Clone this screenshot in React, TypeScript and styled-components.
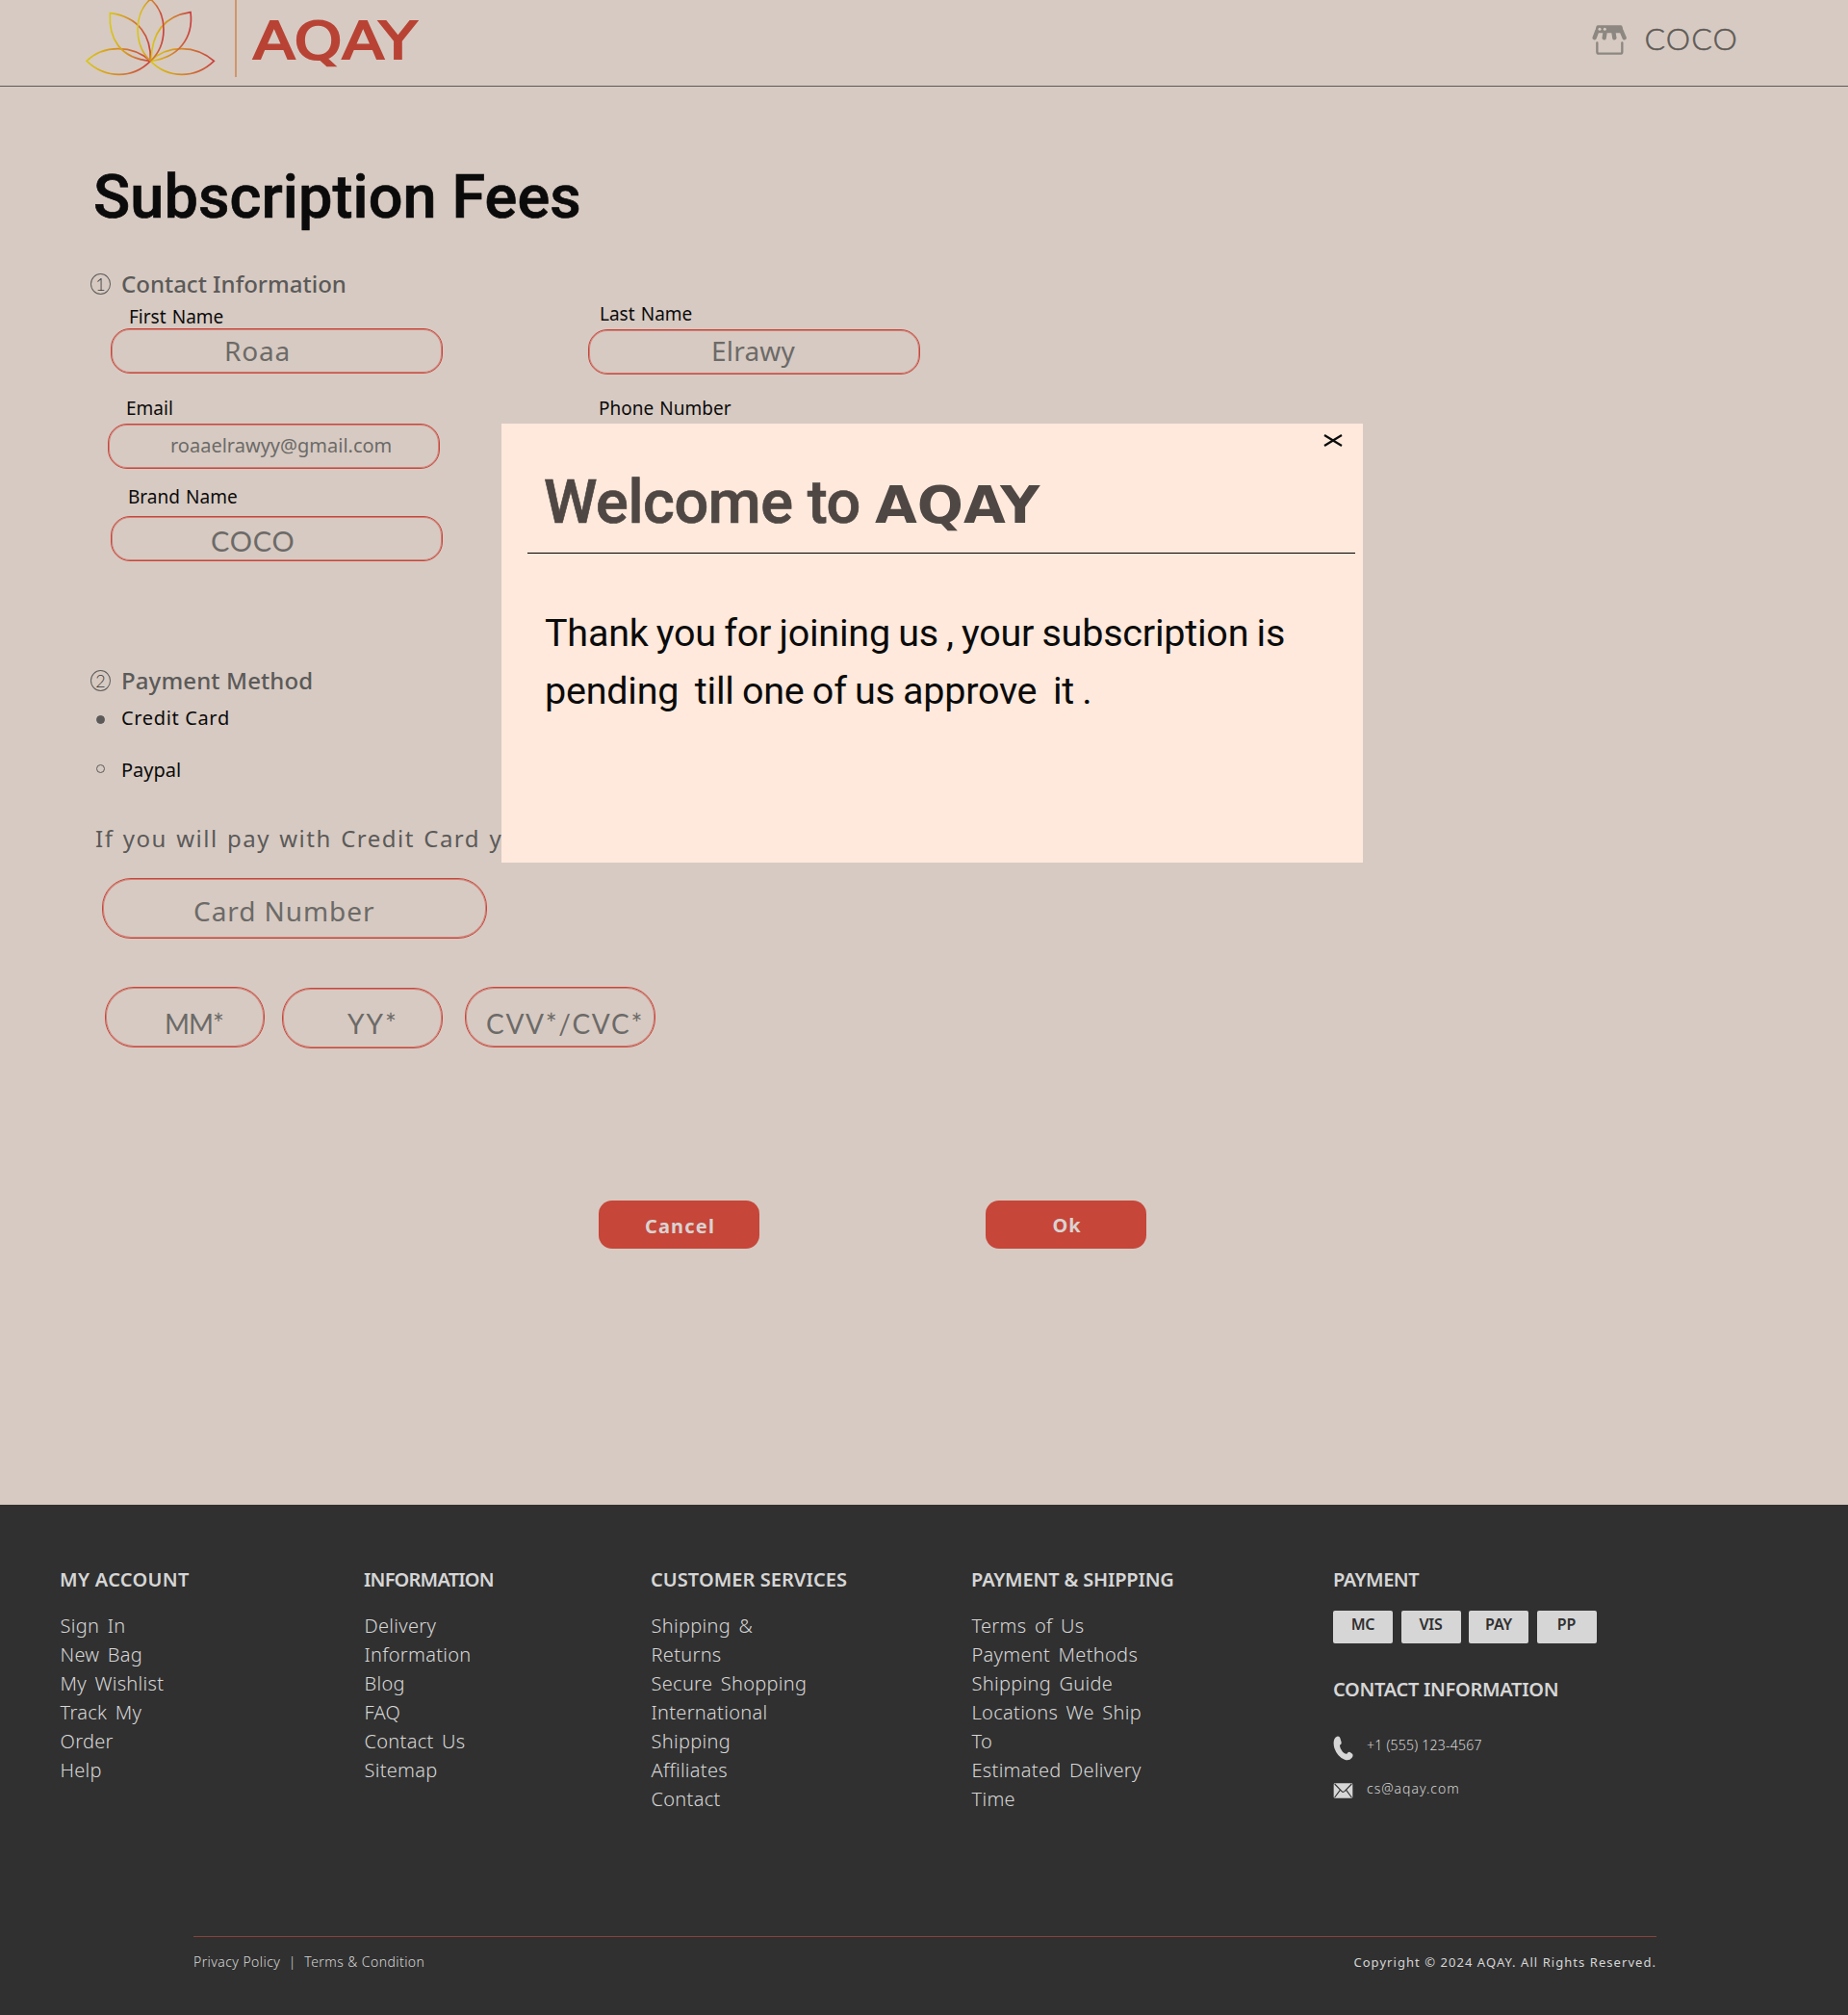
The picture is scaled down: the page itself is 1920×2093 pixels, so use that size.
import React from "react";
import styled, { createGlobalStyle } from "styled-components";

const sans = `"Noto Sans", "Open Sans", sans-serif`;
const round = `Lato, "Noto Sans", sans-serif`;
const display = `Roboto, "Liberation Sans", sans-serif`;
const wide = `"DejaVu Sans", sans-serif`;

const red = "#c8463b";
const grey = "#5b5a59";
const light = "#d6d6d6";

const GlobalStyle = createGlobalStyle`
  * { box-sizing: border-box; }
  body { margin: 0; background: #d7cac2; }
  p, h1, h2, h3, ul { margin: 0; padding: 0; font-weight: inherit; }
  ul { list-style: none; }
`;

const Page = styled.div`
  position: relative;
  width: 1920px;
  height: 2093px;
  overflow: hidden;
  display: flex;
  flex-direction: column;
  background: #d7cac2;
  color: #0b0b0b;
  font-family: ${sans};
  white-space: nowrap;
`;

const Header = styled.header`
  display: flex;
  align-items: flex-start;
  height: 90px;
  flex: none;
  border-bottom: 1px solid #5f5957;
  padding-left: 88px;
`;

const Lotus = styled.svg`
  width: 136px;
  height: 80px;
  flex: none;
`;

const Divider = styled.div`
  width: 2px;
  height: 80px;
  margin-left: 20px;
  background: #d0966a;
`;

const Wordmark = styled.span`
  display: block;
  width: 145px;
  margin: 11px 0 0 17px;
  font: 400 53px/64px ${wide};
  color: #b84335;
  -webkit-text-stroke: 2px #b84335;
  transform: scaleX(1.2);
  transform-origin: 0 0;
`;

const Account = styled.div`
  display: flex;
  margin-left: auto;
  padding-right: 114px;
`;

const ShopIcon = styled.svg`
  width: 36px;
  height: 34px;
  margin: 25px 18px 0 0;
`;

const AccountName = styled.span`
  margin-top: 20px;
  font: 300 32px/40px ${round};
  letter-spacing: 1.1px;
  color: #5f5b57;
  -webkit-text-stroke: 0.5px #5f5b57;
`;

const Main = styled.main`
  display: flex;
  flex-direction: column;
  height: 1473px;
  flex: none;
`;

const Title = styled.h1`
  margin: 77px 0 1px 97px;
  font: 500 63px/76px ${display};
  letter-spacing: 0.1px;
  -webkit-text-stroke: 0.7px #0b0b0b;
`;

const SectionHead = styled.h2<{ $top: number }>`
  display: flex;
  align-items: center;
  gap: 11px;
  height: 30px;
  margin: ${(p) => p.$top}px 0 0 94px;
  font-size: 24px;
  font-weight: 500;
  line-height: 30px;
  color: ${grey};
`;

const Step = styled.span`
  display: grid;
  place-items: center;
  width: 21px;
  height: 22px;
  margin-top: 1px;
  border: 1px solid #5f5d5b;
  border-radius: 50%;
  font: 300 18px/20px ${round};
  color: #3f3e3d;
`;

const SectionTitle = styled.span<{ $track?: number }>`
  padding-top: 1px;
  letter-spacing: ${(p) => p.$track ?? 0}px;
`;

const ContactGrid = styled.div`
  display: grid;
  grid-template-columns: 496px 360px;
  height: 274px;
  margin-left: 115px;
`;

const Column = styled.div<{ $top: number }>`
  display: flex;
  flex-direction: column;
  padding-top: ${(p) => p.$top}px;
`;

const Group = styled.div<{ $top?: number; $shift?: number }>`
  display: flex;
  flex-direction: column;
  margin: ${(p) => p.$top ?? 0}px 0 0 ${(p) => p.$shift ?? 0}px;
`;

const Label = styled.label<{ $indent: number; $gap: number }>`
  height: 24px;
  margin: 0 0 ${(p) => p.$gap}px ${(p) => p.$indent}px;
  font-size: 19px;
  line-height: 26px;
  word-spacing: 1.2px;
`;

const Field = styled.div<{ $w: number; $h?: number; $r?: number; $x?: number; $y?: number; $top?: number }>`
  width: ${(p) => p.$w}px;
  height: ${(p) => p.$h ?? 47}px;
  flex: none;
  margin-top: ${(p) => p.$top ?? 0}px;
  padding: ${(p) => p.$y ?? 0}px 0 0 ${(p) => p.$x ?? 0}px;
  border: 1px solid ${red};
  border-radius: ${(p) => p.$r ?? 20}px;
  box-shadow: inset 0 0 0 1px rgba(200, 70, 59, 0.55);
`;

const Value = styled.span<{ $size?: number; $track?: number; $round?: boolean }>`
  display: block;
  font-family: ${(p) => (p.$round ? round : sans)};
  font-size: ${(p) => p.$size ?? 28}px;
  line-height: ${(p) => ((p.$size ?? 28) > 24 ? 34 : 24)}px;
  letter-spacing: ${(p) => p.$track ?? 0}px;
  color: #6c6a68;
`;

const Option = styled.div<{ $top: number; $track: number }>`
  display: flex;
  align-items: center;
  gap: 17px;
  height: 24px;
  margin: ${(p) => p.$top}px 0 0 100px;
  padding-top: 1px;
  font-size: 20px;
  line-height: 24px;
  letter-spacing: ${(p) => p.$track}px;
`;

const Radio = styled.span<{ $on?: boolean }>`
  width: 9px;
  height: 9px;
  margin-top: ${(p) => (p.$on ? 4 : -2)}px;
  border: 1px solid ${grey};
  border-radius: 50%;
  background: ${(p) => (p.$on ? grey : "transparent")};
`;

const Hint = styled.p`
  width: 900px;
  margin: 45px 0 0 99px;
  font-size: 24px;
  line-height: 30px;
  letter-spacing: 1.5px;
  word-spacing: 1.6px;
  color: ${grey};
`;

const CardNumber = styled.div`
  margin: 26px 0 0 106px;
`;

const CardRow = styled.div`
  display: flex;
  height: 64px;
  margin: 50px 0 0 109px;
`;

const Spacer = styled.div<{ $w: number }>`
  width: ${(p) => p.$w}px;
`;

const Actions = styled.div`
  display: flex;
  gap: 235px;
  margin: 158px 0 0 622px;
`;

const Button = styled.button<{ $drop?: number; $track: number }>`
  width: 167px;
  height: 50px;
  padding: ${(p) => p.$drop ?? 0}px 0 0 2px;
  border: 0;
  border-radius: 14px;
  background: #c64639;
  color: #d9d3d1;
  font: 700 20px/24px ${sans};
  letter-spacing: ${(p) => p.$track}px;
`;

const Modal = styled.section`
  position: absolute;
  left: 521px;
  top: 440px;
  width: 895px;
  height: 456px;
  background: #fee9dc;
`;

const Close = styled.svg`
  position: absolute;
  right: 21px;
  top: 11px;
  width: 20px;
  height: 13px;
`;

const ModalHead = styled.div`
  display: flex;
  align-items: baseline;
  height: 91px;
  margin: 44px 8px 0 27px;
  padding-left: 17px;
  border-bottom: 1px solid #000;
  color: #4f4743;
`;

const ModalTitle = styled.h2`
  width: 344px;
  font: 500 63px/76px ${display};
  letter-spacing: -0.43px;
  -webkit-text-stroke: 0.7px #4f4743;
`;

const ModalBrand = styled.span`
  font: 700 53px/64px ${wide};
  transform: scaleX(1.068);
  transform-origin: 0 0;
`;

const Message = styled.p`
  margin: 53px 0 0 45px;
  font: 400 39.5px/60px ${display};
  letter-spacing: -0.22px;
  word-spacing: -1.3px;
  white-space: pre;
`;

const Footer = styled.footer`
  display: flex;
  flex-direction: column;
  flex: 1;
  padding-top: 66px;
  background: #303030;
  color: ${light};
`;

const FooterGrid = styled.div`
  display: grid;
  grid-template-columns: 316px 298px 333px 376px auto;
  height: 382px;
  padding-left: 62px;
`;

const FooterTitle = styled.h3<{ $track: number; $top?: number }>`
  height: 24px;
  margin-top: ${(p) => p.$top ?? 0}px;
  font-size: 20px;
  font-weight: 600;
  line-height: 24px;
  letter-spacing: ${(p) => p.$track}px;
`;

const LinkList = styled.ul`
  margin-top: 21px;
  padding-left: 0.5px;
  font-size: 20px;
  font-weight: 300;
  line-height: 30px;
  letter-spacing: 0.3px;
  word-spacing: 3px;
`;

const Chips = styled.div`
  display: flex;
  gap: 8.5px;
  margin-top: 20px;
`;

const Chip = styled.span`
  width: 62px;
  height: 34px;
  padding-top: 4px;
  border-radius: 2px;
  background: ${light};
  color: #303030;
  font-size: 16px;
  font-weight: 600;
  line-height: 20px;
  letter-spacing: -0.2px;
  text-align: center;
`;

const ContactRow = styled.div<{ $top: number; $track: number }>`
  display: flex;
  height: 25px;
  margin-top: ${(p) => p.$top}px;
  font-size: 14px;
  font-weight: 300;
  line-height: 20px;
  letter-spacing: ${(p) => p.$track}px;
`;

const PhoneIcon = styled.svg`
  width: 21px;
  height: 26px;
  margin-right: 14px;
`;

const MailIcon = styled.svg`
  width: 21px;
  height: 16px;
  margin: 4px 14px 0 0;
`;

const BottomBar = styled.div`
  display: flex;
  justify-content: space-between;
  margin: 0 199px 0 201px;
  padding-top: 17px;
  border-top: 1px solid #84443b;
  font-size: 14px;
  font-weight: 300;
  line-height: 18px;
  letter-spacing: 0.43px;
`;

const Legal = styled.div`
  display: flex;
  gap: 8.5px;
`;

const Copyright = styled.span`
  font-size: 13px;
  font-weight: 400;
  letter-spacing: 1.05px;
`;

const columns = [
  { title: "MY ACCOUNT", track: 0.32, links: ["Sign In", "New Bag", "My Wishlist", "Track My", "Order", "Help"] },
  { title: "INFORMATION", track: -0.8, links: ["Delivery", "Information", "Blog", "FAQ", "Contact Us", "Sitemap"] },
  {
    title: "CUSTOMER SERVICES",
    track: 0.05,
    links: ["Shipping &", "Returns", "Secure Shopping", "International", "Shipping", "Affiliates", "Contact"],
  },
  {
    title: "PAYMENT & SHIPPING",
    track: -0.17,
    links: ["Terms of Us", "Payment Methods", "Shipping Guide", "Locations We Ship", "To", "Estimated Delivery", "Time"],
  },
];

const petals = [
  { id: "left", d: "M26 190 C80 138 170 140 225 190 C170 246 85 246 26 190Z", x1: 26, x2: 225 },
  { id: "right", d: "M225 190 C280 138 365 140 423 190 C365 246 280 246 225 190Z", x1: 225, x2: 423 },
  { id: "upLeft", d: "M99 41 C190 52 228 115 225 190 C130 182 94 120 99 41Z", x1: 99, x2: 225 },
  { id: "upRight", d: "M350 38 C255 52 228 120 227 190 C310 180 360 120 350 38Z", x1: 227, x2: 350 },
  { id: "mid", d: "M225 -3 C171 45 173 140 225 190 C279 140 280 45 225 -3Z", x1: 185, x2: 266 },
];

export default function App() {
  return (
    <Page>
      <GlobalStyle />
      <Header>
        <Lotus viewBox="20 0 408 240">
          <defs>
            {petals.map((p) => (
              <linearGradient key={p.id} id={p.id} gradientUnits="userSpaceOnUse" x1={p.x1} x2={p.x2} y1="0" y2="0">
                <stop offset="0" stopColor="#d8c71d" />
                <stop offset="0.3" stopColor="#d7a51e" />
                <stop offset="0.6" stopColor="#d07a35" />
                <stop offset="1" stopColor="#c93f3d" />
              </linearGradient>
            ))}
          </defs>
          {petals.map((p) => (
            <path key={p.id} d={p.d} fill="none" stroke={`url(#${p.id})`} strokeWidth="5" />
          ))}
        </Lotus>
        <Divider />
        <Wordmark>AQAY</Wordmark>
        <Account>
          <ShopIcon viewBox="0 0 108 102" fill="none" stroke="#8d8781" strokeLinecap="round">
            <path d="M18 4 H90 Q94 4 95 9 L99 28 H9 L13 9 Q14 4 18 4Z" fill="#8d8781" stroke="none" />
            <path d="M15 24 L8 43 M41 24 L38 43 M67 24 L70 43 M93 24 L101 43" strokeWidth="13" />
            <path d="M16 58 V86 Q16 92 22 92 H88 Q94 92 94 86 V58" strokeWidth="7" />
            <circle cx="24" cy="16" r="4.5" fill="#d7cac2" stroke="none" />
            <circle cx="40" cy="16" r="4.5" fill="#d7cac2" stroke="none" />
          </ShopIcon>
          <AccountName>COCO</AccountName>
        </Account>
      </Header>

      <Main>
        <Title>Subscription Fees</Title>
        <SectionHead $top={35}>
          <Step>1</Step>
          <SectionTitle>Contact Information</SectionTitle>
        </SectionHead>
        <ContactGrid>
          <Column $top={7}>
            <Group>
              <Label $indent={19} $gap={1}>First Name</Label>
              <Field $w={345} $x={117} $y={5}><Value $track={0.8}>Roaa</Value></Field>
            </Group>
            <Group $top={23} $shift={-3}>
              <Label $indent={19} $gap={5}>Email</Label>
              <Field $w={345} $x={64} $y={10}><Value $size={20}>roaaelrawyy@gmail.com</Value></Field>
            </Group>
            <Group $top={16}>
              <Label $indent={18} $gap={9}>Brand Name</Label>
              <Field $w={345} $x={103} $y={8}><Value $size={29} $track={0.8} $round>COCO</Value></Field>
            </Group>
          </Column>
          <Column $top={4}>
            <Group>
              <Label $indent={12} $gap={5}>Last Name</Label>
              <Field $w={345} $x={127} $y={4}><Value $track={0.2}>Elrawy</Value></Field>
            </Group>
            <Group $top={22}>
              <Label $indent={11} $gap={5}>Phone Number</Label>
              <Field $w={345} />
            </Group>
          </Column>
        </ContactGrid>

        <SectionHead $top={108}>
          <Step>2</Step>
          <SectionTitle $track={0.12}>Payment Method</SectionTitle>
        </SectionHead>
        <Option $top={12} $track={0.65}><Radio $on />Credit Card</Option>
        <Option $top={30} $track={0}><Radio />Paypal</Option>
        <Hint>If you will pay with Credit Card you</Hint>
        <CardNumber>
          <Field $w={400} $h={63} $r={30} $x={94} $y={16}><Value $track={0.93}>Card Number</Value></Field>
        </CardNumber>
        <CardRow>
          <Field $w={166} $h={63} $r={30} $x={61} $y={20}><Value $track={-1} $round>MM*</Value></Field>
          <Spacer $w={18} />
          <Field $w={167} $h={63} $r={30} $x={67} $y={19} $top={1}><Value $track={2} $round>YY*</Value></Field>
          <Spacer $w={23} />
          <Field $w={198} $h={63} $r={30} $x={21} $y={20}><Value $track={1.7} $round>CVV*/CVC*</Value></Field>
        </CardRow>
        <Actions>
          <Button $track={1.2} $drop={4}>Cancel</Button>
          <Button $track={1} $drop={2}>Ok</Button>
        </Actions>
      </Main>

      <Footer>
        <FooterGrid>
          {columns.map((c) => (
            <div key={c.title}>
              <FooterTitle $track={c.track}>{c.title}</FooterTitle>
              <LinkList>
                {c.links.map((l) => (
                  <li key={l}>{l}</li>
                ))}
              </LinkList>
            </div>
          ))}
          <div>
            <FooterTitle $track={-0.5}>PAYMENT</FooterTitle>
            <Chips>
              {["MC", "VIS", "PAY", "PP"].map((c) => (
                <Chip key={c}>{c}</Chip>
              ))}
            </Chips>
            <FooterTitle $track={-0.3} $top={36}>CONTACT INFORMATION</FooterTitle>
            <ContactRow $top={36} $track={0.25}>
              <PhoneIcon viewBox="0 0 63 78">
                <path
                  d="M12 2 Q20 0 22 7 L26 20 Q27 26 21 29 Q20 38 30 50 Q38 58 43 56 Q47 49 53 51 L60 56 Q64 61 59 68 Q50 79 36 74 Q14 66 4 38 Q-3 10 12 2Z"
                  fill={light}
                />
              </PhoneIcon>
              +1 (555) 123-4567
            </ContactRow>
            <ContactRow $top={20} $track={0.98}>
              <MailIcon viewBox="0 0 63 48">
                <rect x="2" y="1" width="59" height="46" rx="4" fill={light} />
                <path d="M5 3 L27 26 Q31 30 36 26 L58 3 M5 45 L22 22 M58 45 L41 22" fill="none" stroke="#303030" strokeWidth="3.4" />
              </MailIcon>
              cs@aqay.com
            </ContactRow>
          </div>
        </FooterGrid>
        <BottomBar>
          <Legal>
            <span>Privacy Policy</span>
            <span>|</span>
            <span>Terms &amp; Condition</span>
          </Legal>
          <Copyright>Copyright © 2024 AQAY. All Rights Reserved.</Copyright>
        </BottomBar>
      </Footer>

      <Modal>
        <Close viewBox="0 0 20 13" stroke="#0b0b0b" strokeWidth="2.2" fill="none">
          <path d="M1 1 L19 12 M19 1 L1 12" />
        </Close>
        <ModalHead>
          <ModalTitle>Welcome to</ModalTitle>
          <ModalBrand>AQAY</ModalBrand>
        </ModalHead>
        <Message>{"Thank you for joining us , your subscription is\npending  till one of us approve  it ."}</Message>
      </Modal>
    </Page>
  );
}
